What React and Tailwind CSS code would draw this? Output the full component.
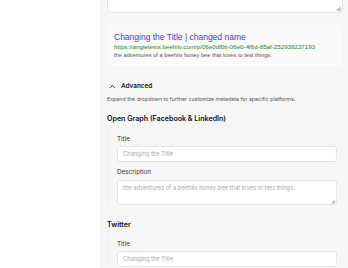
export default function App() {
  return (
    <div className="flex h-[268px] w-[348px] overflow-hidden bg-white font-['Inter',sans-serif]">
      <div className="w-[100px] shrink-0 bg-white" />
      <div className="flex-1 bg-[#f6f6f6] pl-[7px] pr-[5px]">
        <div className="-mt-[20px] h-[33px] rounded-[4px] border border-[#e3e3e3] bg-white relative">
          <span className="absolute bottom-[1px] right-[1px] text-[6px] leading-none text-[#bbb]">◢</span>
        </div>

        <div className="ml-[1px] mt-[12px] h-[41px] rounded-[3px] bg-[#fafafa] px-[6px] pt-[6px] font-['Liberation_Sans',Arial,sans-serif]">
          <div className="text-[8.5px] leading-[11px] text-[#3b3bd0] translate-y-[1px]">Changing the Title | changed name</div>
          <div className="text-[6.2px] leading-[9px] text-[#2a7f35]">
            https://angietests.beehiiv.com/p/06e0df0b-06e0-4f6d-85af-252938237193
          </div>
          <div className="text-[5.7px] leading-[9px] text-[#555]">
            the adventures of a beehiiv honey bee that loves to test things.
          </div>
        </div>

        <div className="mt-[15px] flex items-center gap-[5px] pl-[2px]">
          <svg width="7" height="7" viewBox="0 0 10 10" className="text-[#333]">
            <path d="M2 6.5 5 3.5 8 6.5" fill="none" stroke="currentColor" strokeWidth="1.4" strokeLinecap="round" strokeLinejoin="round" />
          </svg>
          <span className="text-[6.4px] font-semibold leading-[10px] text-[#222]">Advanced</span>
        </div>
        <p className="mt-[4px] text-[5.3px] leading-[8px] text-[#555]">
          Expand the dropdown to further customize metadata for specific platforms.
        </p>

        <h3 className="mt-[10px] text-[7.1px] font-semibold leading-[11px] text-[#111]">
          Open Graph (Facebook &amp; LinkedIn)
        </h3>
        <div className="ml-[1px] mt-[4px] border-l border-[#ececec] pl-[8px] pr-[6px] pt-[7px]">
          <label className="block text-[6.3px] leading-[9px] text-[#333]">Title</label>
          <div className="mt-[2px] flex h-[16px] items-center rounded-[3px] border border-[#e3e3e3] bg-white px-[5px] text-[5.8px] text-[#aaa]">
            Changing the Title
          </div>
          <label className="mt-[6px] block text-[6.3px] leading-[9px] text-[#333]">Description</label>
          <div className="relative mt-[3px] h-[25px] rounded-[3px] border border-[#e3e3e3] bg-white px-[5px] pt-[3px] text-[5.8px] leading-[8px] text-[#aaa]">
            the adventures of a beehiiv honey bee that loves to test things.
            <span className="absolute bottom-[0px] right-[1px] text-[5px] leading-none text-[#bbb]">◢</span>
          </div>
        </div>

        <h3 className="mt-[14px] text-[7.1px] font-semibold leading-[11px] text-[#111]">Twitter</h3>
        <div className="ml-[1px] mt-[4px] border-l border-[#ececec] pl-[8px] pr-[6px] pt-[6px]">
          <label className="block text-[6.3px] leading-[9px] text-[#333]">Title</label>
          <div className="mt-[2px] flex h-[16px] items-center rounded-[3px] border border-[#e3e3e3] bg-white px-[5px] text-[5.8px] text-[#aaa]">
            Changing the Title
          </div>
        </div>
      </div>
    </div>
  );
}
